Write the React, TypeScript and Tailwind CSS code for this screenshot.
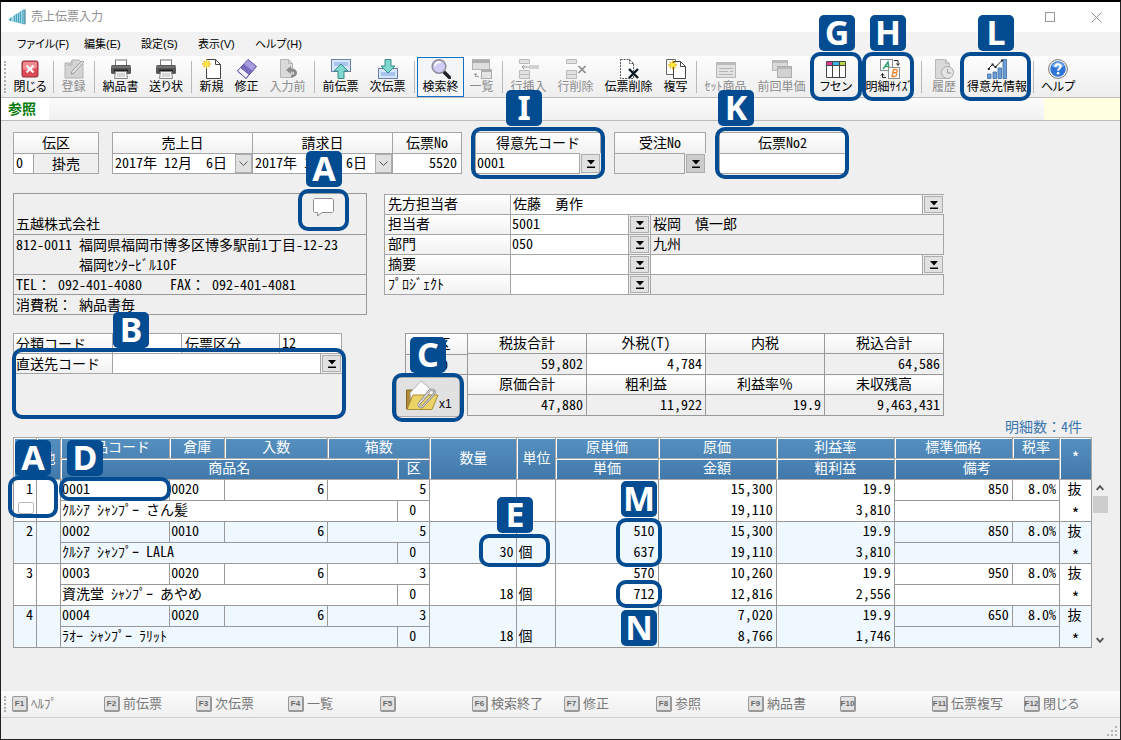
import type { ReactNode } from "react";

const gothic = "font-['Noto_Sans_CJK_JP',sans-serif] [font-feature-settings:'hwid']";
const uiFont = "font-['Liberation_Sans','Noto_Sans_CJK_JP',sans-serif] [font-feature-settings:'palt']";
const wide = "[font-feature-settings:normal]";
const labelBg = "bg-linear-to-b from-white to-[#f1f1f1]";
const line = "border-[#a5a5a8]";

/* ---------- icons ---------- */

function Svg({ children }: { children: ReactNode }) {
  return (
    <svg viewBox="0 0 20 20" className="h-5 w-5" fill="none" aria-hidden="true">
      {children}
    </svg>
  );
}

const CloseIcon = () => (
  <Svg>
    <rect x="2" y="2" width="16" height="16" rx="1.5" fill="#dc4a56" stroke="#8d3038" />
    <path d="M3 3h14v5.500c-4 3-10 3-14 2z" fill="#ee8a90" />
    <path d="M6.500 6.500l7 7M13.500 6.500l-7 7" stroke="#fff" strokeWidth="2.200" />
  </Svg>
);
const RegisterIcon = () => (
  <Svg>
    <path d="M1 4h6l1-3h7l4 4v14H1z" fill="#d3d3d3" stroke="#b3b3b3" />
    <path d="M8 2v4H3" stroke="#b3b3b3" />
    <path d="M7 15l1-3 10-10 2 1-10 11z" fill="#e6e6e6" stroke="#9c9c9c" />
  </Svg>
);
const PrinterIcon = () => (
  <Svg>
    <rect x="4.500" y="1" width="11" height="6" fill="#fff" stroke="#777" />
    <rect x="0" y="6" width="20" height="9" rx="1.500" fill="#585858" />
    <path d="M0 8h20" stroke="#8c8c8c" />
    <path d="M3 11.500h14" stroke="#222" strokeWidth="2" />
    <path d="M4.500 12.500h11l1 7h-13z" fill="#f4f4f4" stroke="#888" />
    <path d="M6 15h8M6 17h8" stroke="#bbb" />
  </Svg>
);
const Spark = () => (
  <>
    <path d="M4.500 .5v9M0 5h9M1.500 2l6 6M7.500 2l-6 6" stroke="#efb810" strokeWidth="1.300" />
    <circle cx="4.500" cy="5" r="2.200" fill="#ffe93b" />
  </>
);
const NewIcon = () => (
  <Svg>
    <path d="M4.500.5h9l5 5v14h-14z" fill="#fff" stroke="#444" />
    <path d="M13.500.5v5h5" stroke="#444" />
    <Spark />
  </Svg>
);
const EraserIcon = () => (
  <Svg>
    <path d="M.5 12L11 .5l8.500 7L9 19.500z" fill="#7c6cc0" stroke="#51459a" />
    <path d="M11 1l8 6.500-4 4L7 5z" fill="#a99be0" />
    <path d="M.5 12l3-3.500 8.500 7-3 4z" fill="#f4f2ff" stroke="#6a62a0" />
  </Svg>
);
const UndoIcon = () => (
  <Svg>
    <path d="M2.500.5h8l4 4v14h-12z" fill="#dadada" stroke="#b5b5b5" />
    <path d="M10.500.5v4h4" stroke="#b5b5b5" />
    <path d="M8 11l5-4v2.500c8-.5 8 9 0 9v-2.500c4 0 4-3.800 0-3.600V15z" fill="#8b8b8b" />
  </Svg>
);
const PrevIcon = () => (
  <Svg>
    <rect x=".5" y=".5" width="19" height="12" fill="#d6e5fb" stroke="#6b80a8" />
    <path d="M3 3h14v4H3z" fill="#a9c4f2" />
    <path d="M10 5l7 7h-4v7.500H7V12H3z" fill="#7fd8cf" stroke="#3a8a86" />
  </Svg>
);
const NextIcon = () => (
  <Svg>
    <rect x=".5" y="9.500" width="19" height="10" fill="#d6e5fb" stroke="#6b80a8" />
    <path d="M3 13h14v4H3z" fill="#a9c4f2" />
    <path d="M7 .5h6v6.500h4L10 14 3 7h4z" fill="#7fd8cf" stroke="#3a8a86" />
  </Svg>
);
const SearchIcon = () => (
  <Svg>
    <path d="M12.500 12.500l6 6" stroke="#22222c" strokeWidth="3.600" strokeLinecap="round" />
    <circle cx="8" cy="7.500" r="6.800" fill="#cfcdf3" stroke="#8a8a98" strokeWidth="1.500" />
    <path d="M4 7c0-3 3-4.500 6-3.500" stroke="#fff" strokeWidth="1.600" />
  </Svg>
);
const ListIcon = () => (
  <Svg>
    <rect x=".5" y=".5" width="17" height="10" fill="#dedede" stroke="#b4b4b4" />
    <path d="M0 2.500h18" stroke="#adadad" strokeWidth="3" />
    <rect x="9.500" y="10.500" width="10" height="9" fill="#e4e4e4" stroke="#adadad" />
    <path d="M9 12h11" stroke="#adadad" strokeWidth="2" />
    <path d="M3.500 18v-3M2 16l1.500-2L5 16M4 17.500h3" stroke="#a0a0a0" />
  </Svg>
);
const InsertRowIcon = () => (
  <Svg>
    <path d="M.5.500h10v4h-10zM.5 11.500h10v4h-10zM.5 15.500h10v4h-10z" fill="#e2e2e2" stroke="#bababa" />
    <path d="M10 6h10v4H10z" fill="#d2d2d2" />
    <path d="M3 8h7M5 6L3 8l2 2" stroke="#999" />
  </Svg>
);
const DeleteRowIcon = () => (
  <Svg>
    <path d="M.5.500h10v4h-10zM.5 11.500h10v4h-10zM.5 15.500h10v4h-10z" fill="#e2e2e2" stroke="#bababa" />
    <path d="M12.500 7l7 7M19.500 7l-7 7" stroke="#8d8d8d" strokeWidth="1.600" />
  </Svg>
);
const DeleteSlipIcon = () => (
  <Svg>
    <path d="M1.500.5h9l4 4v15h-13z" fill="#fff" stroke="#555" strokeDasharray="2 1" />
    <path d="M10.500.5v4h4" stroke="#555" strokeDasharray="2 1" />
    <path d="M10 10l9 9M19 10l-9 9" stroke="#0d1c22" strokeWidth="2.400" />
  </Svg>
);
const CopyIcon = () => (
  <Svg>
    <path d="M.5.500h9v15h-9z" fill="#fff" stroke="#666" />
    <path d="M7.500 2.500h7l5 5v12h-12z" fill="#fff" stroke="#444" />
    <path d="M14.500 2.500v5h5" stroke="#444" />
    <g transform="translate(2 1)">
      <Spark />
    </g>
  </Svg>
);
const SetIcon = () => (
  <Svg>
    <rect x=".5" y="3.500" width="19" height="15" fill="#e2e2e2" stroke="#b9b9b9" />
    <path d="M1 5h18" stroke="#bcbcbc" strokeWidth="2" />
    <path d="M3 9.500h14M3 12.500h9M14 12.500h3M3 15.500h14" stroke="#b5b5b5" />
  </Svg>
);
const PrevPriceIcon = () => (
  <Svg>
    <rect x=".5" y="1.500" width="15" height="10" fill="#dadada" stroke="#b9b9b9" />
    <path d="M1 3h14" stroke="#bababa" strokeWidth="2" />
    <rect x="5.500" y="7.500" width="14" height="11" fill="#d2d2d2" stroke="#adadad" />
    <path d="M6 9h13" stroke="#bababa" strokeWidth="2" />
  </Svg>
);
const TagIcon = () => (
  <Svg>
    <path d="M.5 2.500h19v16H.5z" fill="#fff" />
    <path d="M1 3h6v4H1z" fill="#e0398f" />
    <path d="M7 3h6v4H7z" fill="#3db4e8" />
    <path d="M13 3h6v4h-6z" fill="#b6d94c" />
    <path d="M.5 2.500h19v16H.5zM.5 6.500h19M6.500 2.500v16M13.500 2.500v16" stroke="#444" />
  </Svg>
);
const SizeIcon = () => (
  <Svg>
    <rect x=".5" y=".5" width="12" height="11" fill="#fff" stroke="#8c8c8c" />
    <path d="M3 10l5-7 1 7M5 7.500h4" stroke="#38a273" strokeWidth="1.500" />
    <rect x="8.500" y="8.500" width="11" height="11" fill="#fff" stroke="#8c8c8c" />
    <path d="M12 17.500l1.500-7h2.500c2 0 1.500 3-.5 3.300 2 .2 1.500 3.700-1 3.700zM13 13.800h3" stroke="#ee8a36" strokeWidth="1.400" />
    <path d="M14 1.500h4V6M16.500 4.500L18 6.500l1.500-2M6 18.500H2.500V15M1 16.500l1.500-2 1.500 2" stroke="#222" />
  </Svg>
);
const HistoryIcon = () => (
  <Svg>
    <path d="M1.500.5h10l4 4v15h-14z" fill="#d9d9d9" stroke="#b9b9b9" />
    <path d="M11.500.5v4h4" stroke="#b9b9b9" />
    <circle cx="13.500" cy="13.500" r="6" fill="#e4e4e4" stroke="#a8a8a8" />
    <path d="M13.500 10v4h3.500" stroke="#999" />
  </Svg>
);
const ChartIcon = () => (
  <Svg>
    <path d="M.5 15h3.500v4.500H.5zM6 13h3.500v6.500H6zM11 9h3.500v10.500H11zM16 .5h3.500v19H16z" fill="#6d9fd4" stroke="#3a6ca8" strokeWidth=".8" />
    <path d="M1.500 9.500l4-4 3 2.500 7-7" stroke="#222" />
    <path d="M.8 9h2v2h-2zM4.600 4.500h2v2h-2zM7.600 7h2v2h-2zM14 .5h2v2h-2z" fill="#222" />
  </Svg>
);
const HelpIcon = () => (
  <Svg>
    <circle cx="10" cy="10" r="9.400" fill="#f2f2f2" stroke="#777" />
    <circle cx="10" cy="10" r="7.700" fill="#2f74d6" />
    <path d="M4 7c2-5 10-5 12 0-3 2-9 2-12 0z" fill="#7fb2f0" />
    <path d="M7.300 8c0-3.600 5.600-3.400 5.400-.3-.1 1.900-2.600 1.900-2.600 4" stroke="#fff" strokeWidth="2" />
    <circle cx="10.100" cy="14.300" r="1.300" fill="#fff" />
  </Svg>
);

function AppIcon() {
  return (
    <svg viewBox="0 0 17 16" className="mr-[5px] h-4 w-[17px]" aria-hidden="true">
      <path d="M0 10l3.500-2.500v5L0 11.500zM4.500 7L8 4.500v9l-3.500-.8zM8.500 4.500L12 2v12.500l-3.500-.8zM12.500 1.500L15.500 0v15.500l-3-.8z" fill="#4aa5bf" />
      <path d="M2 8.500l1-.7v4.400l-1-.2zM6 6l1-.7v7.800l-1-.2zM10 3.600l1-.7v11l-1-.2zM13.500 1.500l1-.6v13.800l-1-.2z" fill="#8fd3e4" />
      <path d="M15.500 0l1 1v14l-1 .5z" fill="#2a6f86" />
    </svg>
  );
}

function CommentIcon() {
  return (
    <svg viewBox="0 0 21 19" className="h-[19px] w-[21px]" aria-hidden="true">
      <path d="M1.500.5h18l1 1v12l-1 1H9L4.500 18l.3-3.500H1.500l-1-1v-12z" fill="#fff" stroke="#8f8f8f" />
    </svg>
  );
}

function ClipFolder() {
  return (
    <svg viewBox="0 0 34 32" className="h-8 w-[34px]" fill="none" aria-hidden="true">
      <path d="M1.500 29V10h6l2 2h17v17z" fill="#b08b3c" stroke="#85682a" />
      <path d="M5 13L16 1l13 11-9 14L7 24z" fill="#fbfbfb" stroke="#b5b5b5" />
      <path d="M2 29.500L8 15h25l-6 14.500z" fill="#ecd366" stroke="#a88d35" />
      <path
        d="M13 25l11-14c3-3 7 0 5 3L18 26c-2 2.500-5.500 0-3.500-2.500L24 13"
        stroke="#85858a"
        strokeWidth="2.400"
      />
      <path d="M13 25l11-14c3-3 7 0 5 3L18 26c-2 2.500-5.500 0-3.500-2.500L24 13" stroke="#e8e8ea" />
    </svg>
  );
}

/* ---------- small controls ---------- */

const Wide = ({ children }: { children: ReactNode }) => <span className={wide}>{children}</span>;

function PickButton({ label, disabled }: { label: string; disabled?: boolean }) {
  return (
    <button
      type="button"
      aria-label={label}
      disabled={disabled}
      className="m-px flex w-[19px] shrink-0 items-center justify-center self-stretch border border-[#adadad] bg-[#e1e1e1] disabled:bg-[#cccccc]"
    >
      <svg viewBox="0 0 8 8" className="h-2 w-2" aria-hidden="true">
        <path d="M0 0h8L4 4.500zM0 6.500h8V8H0z" fill="#000" />
      </svg>
    </button>
  );
}

function DateField({ id, label, value }: { id: string; label: string; value: string }) {
  return (
    <div className={`w-[140px] border-r ${line}`}>
      <label htmlFor={id} className={`block h-5 text-center leading-[18px] ${labelBg}`}>
        {label}
      </label>
      <div className={`flex h-5 border-t bg-white ${line}`}>
        <input id={id} defaultValue={value} className="w-full min-w-0 pb-0.5 pl-0.5" />
        <button
          type="button"
          aria-label={`${label}の選択`}
          className="flex w-[17px] shrink-0 items-center justify-center border border-[#adadad] bg-[#e1e1e1]"
        >
          <svg viewBox="0 0 9 6" className="h-1.5 w-[9px]" fill="none" aria-hidden="true">
            <path d="M.5 .5l4 4 4-4" stroke="#555" />
          </svg>
        </button>
      </div>
    </div>
  );
}

type Tool = { label: string; icon: () => ReactNode; width: string; off?: boolean; on?: boolean };

const toolGroups: Tool[][] = [
  [{ label: "閉じる", icon: CloseIcon, width: "w-10" }],
  [{ label: "登録", icon: RegisterIcon, width: "w-[35px]", off: true }],
  [
    { label: "納品書", icon: PrinterIcon, width: "w-[47px]" },
    { label: "送り状", icon: PrinterIcon, width: "w-11" },
  ],
  [
    { label: "新規", icon: NewIcon, width: "w-[35px]" },
    { label: "修正", icon: EraserIcon, width: "w-[35px]" },
    { label: "入力前", icon: UndoIcon, width: "w-[47px]", off: true },
  ],
  [
    { label: "前伝票", icon: PrevIcon, width: "w-[47px]" },
    { label: "次伝票", icon: NextIcon, width: "w-[47px]" },
  ],
  [
    { label: "検索終", icon: SearchIcon, width: "w-[47px]", on: true },
    { label: "一覧", icon: ListIcon, width: "w-[35px]", off: true },
  ],
  [
    { label: "行挿入", icon: InsertRowIcon, width: "w-[47px]", off: true },
    { label: "行削除", icon: DeleteRowIcon, width: "w-[47px]", off: true },
    { label: "伝票削除", icon: DeleteSlipIcon, width: "w-[59px]" },
    { label: "複写", icon: CopyIcon, width: "w-[35px]" },
  ],
  [
    { label: "ｾｯﾄ商品", icon: SetIcon, width: "w-[53px]", off: true },
    { label: "前回単価", icon: PrevPriceIcon, width: "w-[59px]", off: true },
    { label: "フセン", icon: TagIcon, width: "w-[50px]" },
    { label: "明細ｻｲｽﾞ", icon: SizeIcon, width: "w-[57px]" },
  ],
  [
    { label: "履歴", icon: HistoryIcon, width: "w-10", off: true },
    { label: "得意先情報", icon: ChartIcon, width: "w-[66px]" },
  ],
  [{ label: "ヘルプ", icon: HelpIcon, width: "w-11" }],
];

function Toolbar() {
  return (
    <div className="flex h-[42px] items-start border-b border-[#bcbcbc] bg-linear-to-b from-[#fdfdfd] to-[#eeeeee] pt-px">
      <span className="mt-1 mr-1 ml-[3px] h-8 w-0.5 shrink-0 border-l-2 border-dotted border-[#b0b0b0]" />
      {toolGroups.map((group, i) => (
        <div key={i} className="flex items-center">
          {i > 0 && <span className="mx-0.5 h-8 w-0.5 border-r border-[#b9b9b9]" />}
          {group.map((t) => (
            <button
              key={t.label}
              type="button"
              disabled={t.off}
              className={`flex h-10 shrink-0 flex-col items-center border pt-px whitespace-nowrap disabled:text-[#8c8c8c] ${t.width} ${t.on ? "border-[#0f6fc0] bg-[#f3f5f7]" : "border-transparent"}`}
            >
              <t.icon />
              <span className="text-[12px] leading-4">{t.label}</span>
            </button>
          ))}
        </div>
      ))}
    </div>
  );
}

/* ---------- header fields ---------- */

function SlipHeader() {
  return (
    <div className="flex gap-[13px]">
      <div className={`w-[86px] border ${line}`}>
        <label htmlFor="denku" className={`block h-5 text-center leading-[18px] ${labelBg}`}>
          伝区
        </label>
        <div className={`flex h-5 border-t ${line}`}>
          <input id="denku" defaultValue="0" className={`w-5 border-r bg-white pb-0.5 pl-0.5 ${line}`} />
          <span className="flex-1 text-center leading-[18px]">掛売</span>
        </div>
      </div>

      <div className={`flex w-[350px] border ${line}`}>
        <DateField id="sales-date" label="売上日" value="2017年 12月  6日" />
        <DateField id="bill-date" label="請求日" value="2017年 12月  6日" />
        <div className="flex-1">
          <label htmlFor="slip-no" className={`block h-5 text-center leading-[18px] ${labelBg}`}>
            伝票No
          </label>
          <input id="slip-no" defaultValue="5520" className={`block h-5 w-full border-t bg-white pr-1 pb-0.5 text-right ${line}`} />
        </div>
      </div>

      <div className="w-[126px]">
        <label htmlFor="customer" className={`block h-[21px] border border-b-0 text-center leading-[18px] ${labelBg} ${line}`}>
          得意先コード
        </label>
        <div className="flex h-[21px]">
          <input id="customer" defaultValue="0001" className={`w-full min-w-0 border bg-white pb-0.5 pl-px ${line}`} />
          <PickButton label="得意先を選択" />
        </div>
      </div>

      <div className="w-[92px]">
        <label htmlFor="order-no" className={`block h-[21px] border border-b-0 text-center leading-[18px] ${labelBg} ${line}`}>
          受注No
        </label>
        <div className="flex h-[21px]">
          <input id="order-no" disabled className={`w-full min-w-0 border bg-[#efefef] ${line}`} />
          <PickButton label="受注Noを選択" disabled />
        </div>
      </div>

      <div className={`w-[127px] border ${line}`}>
        <label htmlFor="slip-no2" className={`block h-5 text-center leading-[18px] ${labelBg}`}>
          伝票No2
        </label>
        <input id="slip-no2" className={`block h-5 w-full border-t bg-white px-0.5 ${line}`} />
      </div>
    </div>
  );
}

function CustomerCard() {
  return (
    <div className="w-[354px] border border-[#999] leading-[18px] whitespace-pre">
      <div className="flex h-10 items-end justify-between pl-0.5">
        <p className="h-5">五越株式会社</p>
        <button type="button" aria-label="コメント" className="mr-8 self-start pt-1">
          <CommentIcon />
        </button>
      </div>
      <div className="border-t border-[#999] pl-0.5">
        <p className="h-5">812-0011 福岡県福岡市博多区博多駅前1丁目-12-23</p>
        <p className="h-[19px]">{"         福岡ｾﾝﾀｰﾋﾞﾙ10F"}</p>
      </div>
      <p className="h-5 border-t border-[#999] pl-0.5">
        TEL<Wide>：</Wide>
        {" 092-401-4080    FAX"}
        <Wide>：</Wide>
        {" 092-401-4081"}
      </p>
      <p className="h-5 border-t border-[#999] pl-0.5">
        消費税<Wide>：</Wide> 納品書毎
      </p>
    </div>
  );
}

const staff = [
  { id: "contact", label: "先方担当者", wide: "佐藤　勇作" },
  { id: "person", label: "担当者", code: "5001", name: "桜岡　慎一郎" },
  { id: "section", label: "部門", code: "050", name: "九州" },
  { id: "note", label: "摘要", code: "", free: true },
  { id: "project", label: "ﾌﾟﾛｼﾞｪｸﾄ", code: "", name: "" },
];

function StaffFields() {
  return (
    <div className={`mt-px w-[560px] border-b ${line}`}>
      {staff.map((row) => (
        <div key={row.id} className={`flex h-5 border-t ${line}`}>
          <label htmlFor={row.id} className={`w-[126px] shrink-0 border-l pl-[3px] leading-[17px] ${labelBg} ${line}`}>
            {row.label}
          </label>
          {row.wide !== undefined ? (
            <input id={row.id} defaultValue={row.wide} className={`w-full min-w-0 border-x bg-white pb-[3px] pl-0.5 ${wide} ${line}`} />
          ) : (
            <>
              <input id={row.id} defaultValue={row.code} className={`w-[119px] shrink-0 border-x bg-white pb-[3px] pl-px ${line}`} />
              <PickButton label={`${row.label}を選択`} />
              {row.free ? (
                <input aria-label="摘要内容" className={`w-full min-w-0 border-x bg-white ${line}`} />
              ) : (
                <span className={`w-full border-x pl-0.5 leading-[17px] ${wide} ${line}`}>{row.name}</span>
              )}
            </>
          )}
          {(row.wide !== undefined || row.free) && <PickButton label={`${row.label}の候補`} />}
        </div>
      ))}
    </div>
  );
}

function DeliveryFields() {
  return (
    <div className="w-[329px]">
      <div className={`flex h-5 border border-b-0 ${line}`}>
        <label htmlFor="class-code" className={`w-[98px] pl-0.5 leading-[18px] ${labelBg}`}>
          分類コード
        </label>
        <input id="class-code" className={`w-[69px] border-l bg-white ${line}`} />
        <label htmlFor="slip-class" className={`w-[98px] border-l pl-[3px] leading-[18px] ${labelBg} ${line}`}>
          伝票区分
        </label>
        <input id="slip-class" defaultValue="12" className={`min-w-0 flex-1 border-l bg-white pb-0.5 pl-0.5 ${line}`} />
      </div>
      <div className={`flex h-[21px] border-y border-l ${line}`}>
        <label htmlFor="ship-code" className={`w-[98px] shrink-0 pl-0.5 leading-[18px] ${labelBg}`}>
          直送先コード
        </label>
        <input id="ship-code" className={`w-full min-w-0 border-x bg-white ${line}`} />
        <PickButton label="直送先を選択" />
      </div>
    </div>
  );
}

const totalRows = [
  { heads: ["税抜合計", "外税(T)", "内税", "税込合計"], values: ["59,802", "4,784", "", "64,586"] },
  { heads: ["原価合計", "粗利益", "利益率％", "未収残高"], values: ["47,880", "11,922", "19.9", "9,463,431"] },
];

function Totals() {
  return (
    <div className="flex items-start">
      <div className="flex w-[71px] flex-col">
        <dl className="ml-auto w-[62px] border border-r-0 border-[#999] text-center">
          <dt className={`h-5 leading-[18px] ${labelBg}`}>税区</dt>
          <dd className="h-5 border-t border-[#999] pr-[19px] text-right leading-[18px]">0</dd>
        </dl>
        <button
          type="button"
          className={`mt-0.5 flex h-10 w-16 items-end border border-[#adadad] bg-[#e1e1e1] pb-1 pl-2 text-[12px] leading-4 ${uiFont}`}
        >
          <ClipFolder />
          <span>x1</span>
        </button>
      </div>
      <table className="w-[477px] table-fixed border-collapse">
        {totalRows.map((r, i) => (
          <tbody key={i}>
            <tr>
              {r.heads.map((h) => (
                <th
                  key={h}
                  scope="col"
                  className={`h-5 border border-[#999] px-0 pt-0 pb-0.5 font-normal leading-[17px] ${labelBg} ${i === 1 ? wide : ""}`}
                >
                  {h}
                </th>
              ))}
            </tr>
            <tr>
              {r.values.map((v, n) => (
                <td
                  key={n}
                  className={`h-[21px] border border-[#999] pt-0 pr-[3px] pb-0.5 pl-0 text-right leading-[18px] ${i === 0 && n === 1 ? "bg-white" : ""}`}
                >
                  {v}
                </td>
              ))}
            </tr>
          </tbody>
        ))}
      </table>
    </div>
  );
}

/* ---------- detail grid ---------- */

const lines = [
  { no: 1, code: "0001", wh: "0020", per: 6, box: 5, name: "ｸﾙｼｱ ｼｬﾝﾌﾟｰ さん髪", qty: "", unit: "", cost: "", price: "", costSum: "15,300", sum: "19,110", profit: "3,810", std: "850" },
  { no: 2, code: "0002", wh: "0010", per: 6, box: 5, name: "ｸﾙｼｱ ｼｬﾝﾌﾟｰ LALA", qty: "30", unit: "個", cost: "510", price: "637", costSum: "15,300", sum: "19,110", profit: "3,810", std: "850" },
  { no: 3, code: "0003", wh: "0020", per: 6, box: 3, name: "資洗堂 ｼｬﾝﾌﾟｰ あやめ", qty: "18", unit: "個", cost: "570", price: "712", costSum: "10,260", sum: "12,816", profit: "2,556", std: "950" },
  { no: 4, code: "0004", wh: "0020", per: 6, box: 3, name: "ﾗｵｰ ｼｬﾝﾌﾟｰ ﾗﾘｯﾄ", qty: "18", unit: "個", cost: "", price: "", costSum: "7,020", sum: "8,766", profit: "1,746", std: "650" },
];

const th = "h-[21px] border border-[#aaa6a3] px-0 pt-0 pb-1 font-normal leading-4 shadow-[inset_1px_1px_0_#ffffff]";
const td = "h-[21px] border border-[#999] pt-0 pr-[3px] pb-1 pl-px leading-4";
const num = `${td} text-right`;
const upper = `${num} border-b-0`;
const lower = `${num} border-t-0`;
const star = "h-[21px] border border-t-0 border-[#999] px-0 pt-1 pb-0 text-center text-[16px] leading-4";

function DetailGrid() {
  return (
    <div className="flex">
      <table className="w-full table-fixed border-collapse whitespace-nowrap">
        <colgroup>
          <col className="w-[23px]" />
          <col className="w-6" />
          <col className="w-[109px]" />
          <col className="w-[55px]" />
          <col className="w-[103px]" />
          <col className="w-[70px]" />
          <col className="w-8" />
          <col className="w-[87px]" />
          <col className="w-[39px]" />
          <col className="w-[102px]" />
          <col className="w-[118px]" />
          <col className="w-[118px]" />
          <col className="w-[118px]" />
          <col className="w-[47px]" />
          <col className="w-8" />
        </colgroup>
        <thead className="bg-linear-to-b from-[#5590c0] to-[#4178aa] text-white">
          <tr>
            <th className={th} rowSpan={2}></th>
            <th className={th} rowSpan={2}>他</th>
            <th className={th}>商品コード</th>
            <th className={th}>倉庫</th>
            <th className={th}>入数</th>
            <th className={th} colSpan={2}>箱数</th>
            <th className={th} rowSpan={2}>数量</th>
            <th className={th} rowSpan={2}>単位</th>
            <th className={th}>原単価</th>
            <th className={th}>原価</th>
            <th className={th}>利益率</th>
            <th className={th}>標準価格</th>
            <th className={th}>税率</th>
            <th className={`${th} text-[16px]`} rowSpan={2}>*</th>
          </tr>
          <tr>
            <th className={th} colSpan={4}>商品名</th>
            <th className={th}>区</th>
            <th className={th}>単価</th>
            <th className={th}>金額</th>
            <th className={th}>粗利益</th>
            <th className={th} colSpan={2}>備考</th>
          </tr>
        </thead>
        {lines.map((l) => (
          <tbody key={l.no} className="bg-white even:bg-[#f0f8ff]">
            <tr>
              <td className={`${num} align-top`} rowSpan={2}>
                {l.no}
                {l.no === 1 && (
                  <button type="button" aria-label="行コメント" className="mt-1.5 ml-[3px] block h-3 w-4 rounded-xs border border-[#bbb] bg-white" />
                )}
              </td>
              <td className={td} rowSpan={2}></td>
              <td className={td}>{l.code}</td>
              <td className={td}>{l.wh}</td>
              <td className={num}>{l.per}</td>
              <td className={num} colSpan={2}>{l.box}</td>
              <td className={upper}></td>
              <td className={upper}></td>
              <td className={upper}>{l.cost}</td>
              <td className={upper}>{l.costSum}</td>
              <td className={upper}>19.9</td>
              <td className={num}>{l.std}</td>
              <td className={num}>8.0%</td>
              <td className={`${td} border-b-0 text-center`}>抜</td>
            </tr>
            <tr>
              <td className={td} colSpan={4}>{l.name}</td>
              <td className={`${td} text-center`}>0</td>
              <td className={lower}>{l.qty}</td>
              <td className={`${td} border-t-0`}>{l.unit}</td>
              <td className={lower}>{l.price}</td>
              <td className={lower}>{l.sum}</td>
              <td className={lower}>{l.profit}</td>
              <td className={td} colSpan={2}></td>
              <td className={star}>*</td>
            </tr>
          </tbody>
        ))}
      </table>

      <div className="mt-[42px] flex w-4 shrink-0 flex-col items-center">
        <svg viewBox="0 0 17 17" className="h-[17px] w-4" fill="none" aria-hidden="true">
          <path d="M5 11l3.500-4 3.500 4" stroke="#555" strokeWidth="2" />
        </svg>
        <span className="h-[17px] w-[15px] bg-[#cdcdcd]" />
        <svg viewBox="0 0 17 17" className="mt-auto h-[17px] w-4" fill="none" aria-hidden="true">
          <path d="M5 7l3.500 4L12 7" stroke="#555" strokeWidth="2" />
        </svg>
      </div>
    </div>
  );
}

/* ---------- callouts drawn over the window ---------- */

const badges = [
  { text: "G", at: "left-[819px] top-[15px]" },
  { text: "H", at: "left-[870px] top-[15px]" },
  { text: "L", at: "left-[978px] top-[15px]" },
  { text: "I", at: "left-[506px] top-[90px]" },
  { text: "K", at: "left-[718px] top-[90px]" },
  { text: "A", at: "left-[306px] top-[151px]" },
  { text: "B", at: "left-[113px] top-[312px]" },
  { text: "C", at: "left-[410px] top-[337px]" },
  { text: "A", at: "left-[15px] top-[440px]" },
  { text: "D", at: "left-[67px] top-[440px]" },
  { text: "E", at: "left-[497px] top-[497px]" },
  { text: "M", at: "left-[621px] top-[481px]" },
  { text: "N", at: "left-[621px] top-[610px]" },
];

const frames = [
  "left-[810px] top-[52px] h-[49px] w-[52px]",
  "left-[862px] top-[52px] h-[49px] w-[52px]",
  "left-[960px] top-[52px] h-[49px] w-[71px]",
  "left-[471px] top-[127px] h-[52px] w-[134px]",
  "left-[715px] top-[127px] h-[52px] w-[134px]",
  "left-[298px] top-[189px] h-[42px] w-[51px]",
  "left-[12px] top-[348px] h-[71px] w-[334px]",
  "left-[392px] top-[373px] h-[49px] w-[72px]",
  "left-[8px] top-[476px] h-[42px] w-[50px]",
  "left-[59px] top-[477px] h-6 w-[112px]",
  "left-[479px] top-[534px] h-[33px] w-[71px]",
  "left-[616px] top-[518px] h-[49px] w-[46px]",
  "left-[616px] top-[580px] h-7 w-[46px]",
];

function Callouts() {
  return (
    <div className="pointer-events-none absolute inset-0 z-10">
      {frames.map((f) => (
        <span key={f} className={`absolute rounded-[10px] border-4 border-[#034c92] ${f}`} />
      ))}
      {badges.map((b) => (
        <span
          key={b.at}
          className={`absolute flex h-9 w-9 items-center justify-center rounded-[5px] bg-[#034c92] pb-0.5 font-['Noto_Sans',sans-serif] text-[34px] leading-[34px] font-bold text-white ${b.at}`}
        >
          {b.text}
        </span>
      ))}
    </div>
  );
}

const menus = [
  { text: "ファイル(F)", width: "w-[67px]" },
  { text: "編集(E)", width: "w-[57px]" },
  { text: "設定(S)", width: "w-[57px]" },
  { text: "表示(V)", width: "w-[57px]" },
  { text: "ヘルプ(H)", width: "w-[57px]" },
];
const fkeys = ["ﾍﾙﾌﾟ", "前伝票", "次伝票", "一覧", "", "検索終了", "修正", "参照", "納品書", "", "伝票複写", "閉じる"];

export default function App() {
  return (
    <div className="relative overflow-hidden">
      <div className={`flex min-h-screen flex-col border border-t-2 border-[#222] border-t-black bg-[#efefef] text-[14px] text-black ${gothic}`}>
        <header className={uiFont}>
          <div className="flex h-[30px] items-center bg-white pr-4 pl-2 text-[12px] text-[#8f8f8f]">
            <AppIcon />
            <h1>売上伝票入力</h1>
            <button type="button" aria-label="最大化" className="mr-9 ml-auto h-2.5 w-2.5 border border-[#999]" />
            <button type="button" aria-label="閉じる">
              <svg viewBox="0 0 11 11" className="mr-0.5 h-[11px] w-[11px]" aria-hidden="true">
                <path d="M.5 .5l10 10M10.500 .5l-10 10" stroke="#8f8f8f" />
              </svg>
            </button>
          </div>
          <nav className="flex h-6 items-center bg-[#f2f2f2] pl-4 text-[11px]">
            {menus.map((m) => (
              <button key={m.text} type="button" className={`text-left whitespace-nowrap ${m.width}`}>
                {m.text}
              </button>
            ))}
          </nav>
          <Toolbar />
        </header>

        <div className="flex h-[23px] border-b border-[#bcbcbc] bg-linear-to-b from-[#fcfcfc] to-[#f0f0f0]">
          <span className="w-12 bg-white pl-[7px] leading-5 font-bold text-[#087a08]">参照</span>
          <span className="ml-auto w-[76px] bg-[#ffffe1]" />
        </div>

        <main className="flex-1 px-3 pt-[11px] pb-6">
          <SlipHeader />
          <div className="mt-[19px] flex items-start gap-[17px]">
            <CustomerCard />
            <StaffFields />
          </div>
          <div className="mt-[18px] flex items-start gap-[54px]">
            <DeliveryFields />
            <Totals />
          </div>
          <p className="h-5 pr-[26px] text-right leading-[18px] text-[#3a76ad]">
            明細数<Wide>：</Wide>4件
          </p>
          <DetailGrid />
        </main>

        <footer>
          <div className={`flex h-[27px] items-center border-b border-[#cfcfcf] bg-linear-to-b from-[#fbfbfb] to-[#f0f0f0] pl-[3px] text-[13px] text-[#777] ${uiFont}`}>
            <span className="mr-1.5 h-4 shrink-0 border-l-2 border-dotted border-[#b0b0b0]" />
            {fkeys.map((k, i) => (
              <button key={i} type="button" className="flex w-[92px] shrink-0 items-center gap-[3px] whitespace-nowrap">
                <kbd className="flex h-4 w-4 items-center justify-center rounded-xs border border-r-2 border-b-2 border-[#999] bg-[#e2e2e2] font-['Liberation_Sans',sans-serif] text-[8px] leading-3 font-bold text-[#666]">
                  F{i + 1}
                </kbd>
                <span className="leading-5">{k}</span>
              </button>
            ))}
          </div>
          <div className="flex h-[21px] items-end justify-end p-0.5">
            <svg viewBox="0 0 11 11" className="h-[11px] w-[11px]" fill="#b5b5b5" aria-hidden="true">
              <path d="M8 0h2v2H8zM4 4h2v2H4zM8 4h2v2H8zM0 8h2v2H0zM4 8h2v2H4zM8 8h2v2H8z" />
            </svg>
          </div>
        </footer>
      </div>

      <Callouts />
    </div>
  );
}
